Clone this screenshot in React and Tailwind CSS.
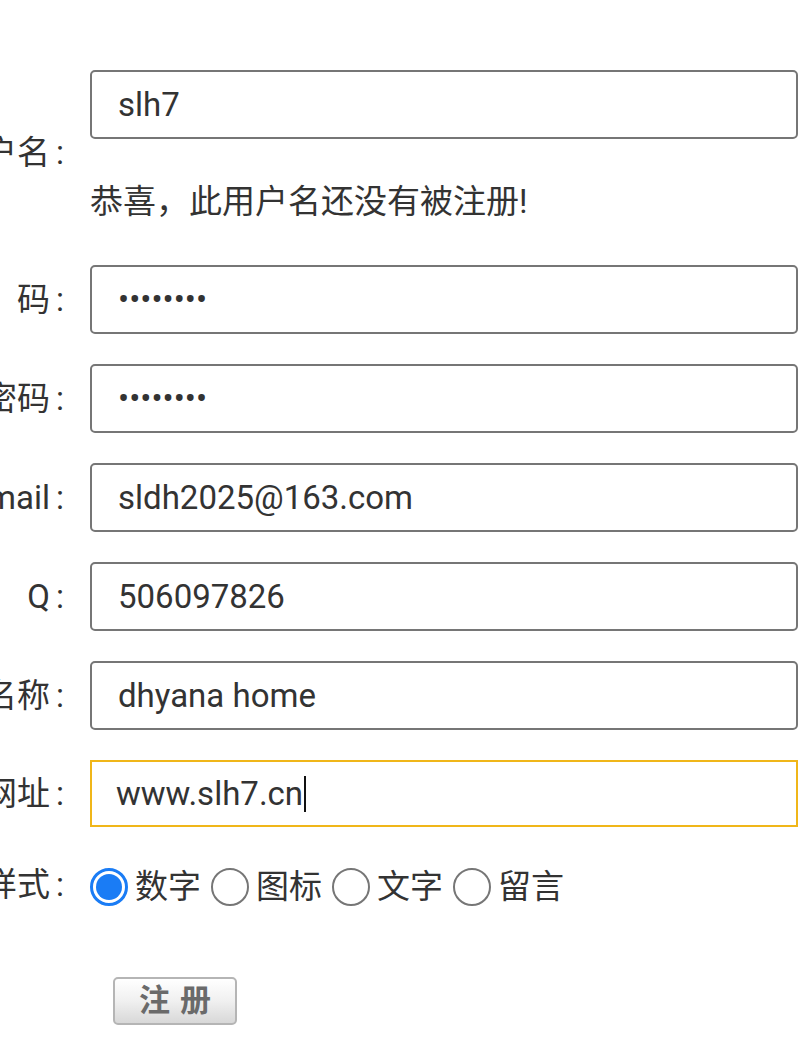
import React from 'react';

const font = { fontFamily: 'Roboto, "Noto Sans CJK SC", sans-serif' };

function Label({ children }) {
  return (
    <div className="flex w-[64px] shrink-0 justify-end whitespace-pre text-[33px] leading-[48px] text-[#333]">
      <span>{children}</span>
      <span className="ml-[6px]">:</span>
    </div>
  );
}

function Field({ label, type = 'text', value }) {
  return (
    <div className="flex items-center">
      <Label>{label}</Label>
      <input
        type={type}
        value={value}
        readOnly
        className="ml-[26px] h-[69px] w-[708px] rounded-[5px] border-2 border-[#767676] bg-white px-[26px] text-[33px] text-[#333] outline-none"
      />
    </div>
  );
}

function Radio({ checked, text }) {
  return (
    <label className="flex items-center">
      {checked ? (
        <span className="flex h-[38px] w-[38px] items-center justify-center rounded-full border-[3px] border-[#1a7cf5] bg-white">
          <span className="h-[26px] w-[26px] rounded-full bg-[#1a7cf5]" />
        </span>
      ) : (
        <span className="h-[38px] w-[38px] rounded-full border-2 border-[#767676] bg-white" />
      )}
      <span className="ml-[7px] mr-[10px] text-[33px] leading-[48px] text-[#333]">{text}</span>
    </label>
  );
}

export default function App() {
  return (
    <div className="w-[800px] overflow-hidden bg-white pt-[70px] pb-[24px]" style={font}>
      <div className="flex flex-col gap-[30px]">
        <div className="flex items-center">
          <Label>用户名</Label>
          <div className="ml-[26px] w-[708px]">
            <input
              type="text"
              value="slh7"
              readOnly
              className="h-[69px] w-full rounded-[5px] border-2 border-[#767676] bg-white px-[26px] text-[33px] text-[#333] outline-none"
            />
            <div className="mt-[39px] mb-[9px] text-[33px] leading-[48px] text-[#333]">恭喜，此用户名还没有被注册!</div>
          </div>
        </div>

        <Field label="密　码" type="password" value="slh7slh7" />
        <Field label="确认密码" type="password" value="slh7slh7" />
        <Field label="Email" value="sldh2025@163.com" />
        <Field label="Q　Q" value="506097826" />
        <Field label="网站名称" value="dhyana home" />

        <div className="flex items-center">
          <Label>网站网址</Label>
          <div className="ml-[26px] flex h-[67px] w-[708px] items-center border-2 border-[#f0b619] bg-white px-[24px] text-[33px] text-[#333]">
            <span>www.slh7.cn</span>
            <span className="ml-[1px] h-[36px] w-[2px] bg-[#111]" />
          </div>
        </div>

        <div className="flex h-[56px] items-center">
          <Label>样式</Label>
          <div className="ml-[26px] flex items-center pt-[4px]">
            <Radio checked text="数字" />
            <Radio text="图标" />
            <Radio text="文字" />
            <Radio text="留言" />
          </div>
        </div>
      </div>

      <div className="mt-[64px] pl-[113px]">
        <button className="flex h-[48px] w-[124px] items-center justify-center rounded-[5px] border-2 border-[#b5b5b5] bg-gradient-to-b from-white via-[#f0f0f0] to-[#d8d8d8] text-[31px] font-bold tracking-[10px] text-[#6a6a6a]">
          <span className="ml-[10px]">注册</span>
        </button>
      </div>
    </div>
  );
}
